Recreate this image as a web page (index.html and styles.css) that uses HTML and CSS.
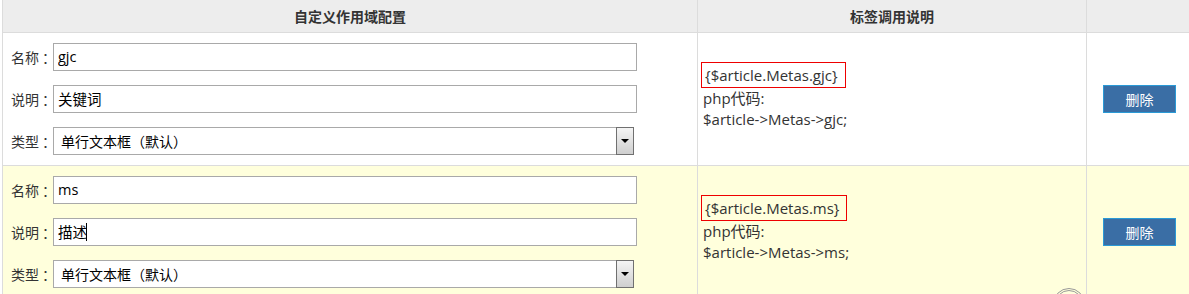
FILE: index.html
```html
<!DOCTYPE html>
<html lang="zh-CN">
<head>
    <meta charset="UTF-8">
    <title>自定义作用域配置</title>
    <link rel="stylesheet" href="styles.css">
</head>
<body>
    <table class="meta-table">
        <thead>
            <tr>
                <th class="col-config">自定义作用域配置</th>
                <th class="col-usage">标签调用说明</th>
                <th class="col-action"></th>
            </tr>
        </thead>
        <tbody>
            <tr>
                <td>
                    <div class="field">
                        <label>名称<span class="colon">：</span></label>
                        <input type="text" value="gjc">
                    </div>
                    <div class="field">
                        <label>说明<span class="colon">：</span></label>
                        <input type="text" value="关键词">
                    </div>
                    <div class="field">
                        <label>类型<span class="colon">：</span></label>
                        <div class="select">
                            <select>
                                <option>单行文本框（默认）</option>
                            </select>
                            <span class="select-btn"><i class="arrow"></i></span>
                        </div>
                    </div>
                </td>
                <td class="usage">
                    <span class="tag">{$article.Metas.gjc}</span>
                    <div>php代码:</div>
                    <div>$article-&gt;Metas-&gt;gjc;</div>
                </td>
                <td class="action"><button>删除</button></td>
            </tr>
            <tr class="alt">
                <td>
                    <div class="field">
                        <label>名称<span class="colon">：</span></label>
                        <input type="text" value="ms">
                    </div>
                    <div class="field">
                        <label>说明<span class="colon">：</span></label>
                        <div class="input-wrap">
                            <input type="text" value="描述">
                            <span class="caret"></span>
                        </div>
                    </div>
                    <div class="field">
                        <label>类型<span class="colon">：</span></label>
                        <div class="select">
                            <select>
                                <option>单行文本框（默认）</option>
                            </select>
                            <span class="select-btn"><i class="arrow"></i></span>
                        </div>
                    </div>
                </td>
                <td class="usage">
                    <span class="tag">{$article.Metas.ms}</span>
                    <div>php代码:</div>
                    <div>$article-&gt;Metas-&gt;ms;</div>
                </td>
                <td class="action"><button>删除</button></td>
            </tr>
        </tbody>
    </table>

    <div class="spinner"></div>
</body>
</html>
```

FILE: styles.css
```css
* {
    box-sizing: border-box;
}

body {
    margin: 0;
    overflow: hidden;
    font-family: "Open Sans", "Noto Sans CJK SC", sans-serif;
    font-size: 14px;
    color: #333;
    background: #fff;
    position: relative;
    height: 294px;
}

.meta-table {
    margin-left: 2px;
    width: 1192px;
    border-collapse: collapse;
    table-layout: fixed;
}

.meta-table th {
    height: 32px;
    background: #ededed;
    border-bottom: 1px solid #dcdcdc;
    border-left: 1px solid #dcdcdc;
    font-family: "Noto Sans CJK SC", sans-serif;
    font-size: 14px;
    font-weight: bold;
    color: #333;
    padding: 0;
    text-align: center;
}

.col-config { width: 695px; }
.col-usage { width: 389px; }

.meta-table td {
    border-left: 1px solid #dcdcdc;
    border-bottom: 1px solid #dcdcdc;
    vertical-align: middle;
    padding: 0;
}

.meta-table td:first-child {
    padding: 10px 0 10px 8px;
}

.alt td {
    background: #ffffdc;
}

.field {
    display: flex;
    align-items: center;
    height: 28px;
    margin-bottom: 14px;
}

.field:last-child {
    margin-bottom: 0;
}

.field label {
    width: 42px;
    font-family: "Noto Sans CJK SC", sans-serif;
    color: #333;
    white-space: nowrap;
}

.colon {
    margin-left: 3px;
}

.field input {
    width: 584px;
    height: 28px;
    border: 1px solid #a9a9a9;
    padding: 0 4px;
    font-family: "Open Sans", "Noto Sans CJK SC", sans-serif;
    font-size: 14.5px;
    color: #000;
    background: #fff;
    outline: none;
}

.input-wrap {
    position: relative;
}

.caret {
    position: absolute;
    left: 33px;
    top: 5px;
    width: 1px;
    height: 18px;
    background: #000;
}

.select {
    position: relative;
    width: 581px;
    height: 28px;
}

.select select {
    width: 100%;
    height: 28px;
    border: 1px solid #a9a9a9;
    background: #fff;
    padding: 0 7px;
    font-family: "Noto Sans CJK SC", sans-serif;
    font-size: 14px;
    color: #000;
    appearance: none;
    -webkit-appearance: none;
    outline: none;
}

.select-btn {
    position: absolute;
    right: 0;
    top: 0;
    width: 18px;
    height: 28px;
    border: 1px solid #707070;
    background: linear-gradient(#f4f4f4, #cfcfcf);
    display: flex;
    align-items: center;
    justify-content: center;
}

.arrow {
    width: 0;
    height: 0;
    border-left: 4px solid transparent;
    border-right: 4px solid transparent;
    border-top: 4px solid #000;
}

.usage {
    padding: 0 0 5px 5px !important;
    font-size: 15px;
    line-height: 21px;
    color: #333;
}

.tag {
    display: block;
    width: fit-content;
    margin-left: -2px;
    padding: 2px 7px 1px 3px;
    line-height: 21px;
    border: 1px solid #e00;
}

.action {
    padding-left: 16px !important;
}

.action button {
    width: 73px;
    height: 28px;
    background: #3a6ea5;
    border: 1px solid #2a9ad6;
    color: #fff;
    font-family: "Noto Sans CJK SC", sans-serif;
    font-size: 14px;
    padding: 0;
    cursor: pointer;
}

.spinner {
    position: absolute;
    left: 1053px;
    top: 288px;
    width: 32px;
    height: 32px;
    border: 3px double #999;
    border-radius: 50%;
}
```
